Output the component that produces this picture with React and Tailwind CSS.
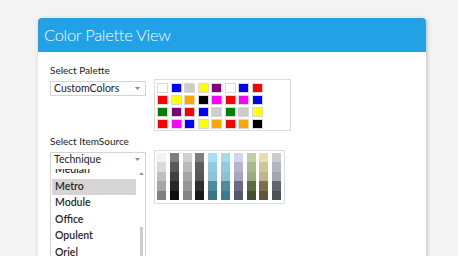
import React from "react";

const paletteColors = [
  ["#ffffff", "#0000ff", "#cccccc", "#ffff00", "#800080", "#ffffff", "#0000ff", "#ff0000"],
  ["#ff0000", "#ffff00", "#ffa500", "#000000", "#ff00ff", "#ff0000", "#ff00ff", "#0000ff"],
  ["#008000", "#800080", "#ff0000", "#0000ff", "#cccccc", "#008000", "#cccccc", "#ffff00"],
  ["#ff0000", "#ff00ff", "#0000ff", "#ffff00", "#ffa500", "#ff0000", "#ffa500", "#000000"],
];

// Technique theme, light to dark per column
const techniqueColumns = [
  ["#f2f2f2", "#d9d9d9", "#bfbfbf", "#a6a6a6", "#808080"],
  ["#7f7f7f", "#595959", "#404040", "#262626", "#0d0d0d"],
  ["#cfcfcb", "#b9b9b5", "#a5a5a1", "#979793", "#858581"],
  ["#7e7e7e", "#5c5c5c", "#565656", "#2e2e2e", "#181818"],
  ["#a8e0f3", "#8ecce0", "#8fc3d4", "#4d8a9b", "#3d7486"],
  ["#a4dcec", "#90cbe0", "#8cbfcf", "#4e8b9b", "#3b7b8b"],
  ["#d5d3ed", "#b7b5cd", "#a8a5be", "#6b6984", "#58556f"],
  ["#c0d0a5", "#a7b98a", "#99ac7e", "#5b6b45", "#424f31"],
  ["#e7ddb1", "#d0c49b", "#c0b48c", "#7b6f4d", "#60573b"],
  ["#c9cdd3", "#b1b6be", "#a2a7af", "#606671", "#4b515b"],
];

const items = ["Median", "Metro", "Module", "Office", "Opulent", "Oriel"];

function Combo({ value, children }) {
  return (
    <div className="relative mt-[2px] w-[96px] h-[15px] border border-[#d4d4d4] bg-white flex items-center pl-[3px] pr-[5px]">
      <span className="flex-1 text-[10.5px] leading-[13px] text-[#222]">{value}</span>
      <svg width="5" height="3" viewBox="0 0 5 3">
        <path d="M0 0h5L2.5 3z" fill="#8a8a8a" />
      </svg>
      {children}
    </div>
  );
}

export default function App() {
  return (
    <div className="h-[256px] overflow-hidden bg-[#f3f3f3] pt-[18px] pl-[38px]" style={{ fontFamily: "Lato, 'Open Sans', sans-serif" }}>
      <div className="w-[388px] h-[260px] bg-white rounded-t-[4px] shadow-[1px_1px_4px_rgba(0,0,0,0.22)]">
        <div className="h-[34px] bg-[#21a1e6] rounded-t-[4px] pl-[6px] flex items-center">
          <span className="text-[16.5px] tracking-[-0.3px] font-light text-white leading-none">Color Palette View</span>
        </div>

        <div className="px-[12px] pt-[11px]">
          <div className="text-[10px] leading-[15px] text-[#222]">Select Palette</div>
          <div className="flex items-start gap-[8px] mt-[1px]">
            <Combo value="CustomColors" />
            <div className="w-[137px] h-[52px] border border-[#dcdcdc] pl-[2px] pt-[2.5px]">
              <div className="grid grid-cols-[repeat(8,11px)] gap-x-[2.5px] gap-y-[2px]">
                {paletteColors.flat().map((c, i) => (
                  <div key={i} className="h-[10px] border border-[#d8d8d8]" style={{ backgroundColor: c }} />
                ))}
              </div>
            </div>
          </div>

          <div className="text-[10px] leading-[15px] text-[#222] mt-[3px]">Select ItemSource</div>
          <div className="flex items-start gap-[8px] mt-[1px]">
            <Combo value="Technique">
              <div className="absolute left-[-1px] top-full w-[96px] h-[100px] bg-white border-x border-[#d4d4d4] pt-[3px]">
                <div className="relative h-full overflow-hidden">
                  <div className="-mt-[7px] pl-[1px] pr-[9px]">
                    {items.map(it => (
                      <div
                        key={it}
                        className={`h-[16.5px] flex items-center pl-[3px] text-[10.5px] font-semibold text-[#2a2a2a] ${it === "Metro" ? "bg-[#d6d4d4]" : ""}`}
                      >
                        {it}
                      </div>
                    ))}
                  </div>
                  <svg className="absolute right-[1px] top-[3px]" width="5" height="3" viewBox="0 0 5 3">
                    <path d="M2.5 0L5 3H0z" fill="#9a9a9a" />
                  </svg>
                  <div className="absolute right-[2px] top-[58px] w-[3px] h-[60px] bg-[#cdcdcd]" />
                </div>
              </div>
            </Combo>
            <div className="w-[131px] h-[54px] border border-[#dcdcdc] pl-[2px] pt-[2px]">
              <div className="flex gap-x-[3.8px]">
                {techniqueColumns.map((col, i) => (
                  <div key={i} className="w-[9px] flex flex-col">
                    {col.map((c, j) => (
                      <div key={j} className="h-[9.4px]" style={{ backgroundColor: c }} />
                    ))}
                  </div>
                ))}
              </div>
            </div>
          </div>
        </div>
      </div>
    </div>
  );
}
